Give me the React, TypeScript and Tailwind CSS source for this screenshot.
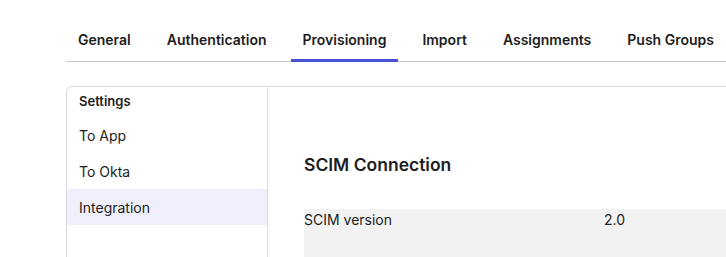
import React from 'react';

const tabs = ['General', 'Authentication', 'Provisioning', 'Import', 'Assignments', 'Push Groups'];
const sideItems = ['To App', 'To Okta', 'Integration'];

export default function App() {
  const active = 'Provisioning';
  const activeSide = 'Integration';

  return (
    <div
      className="w-[726px] h-[257px] overflow-hidden bg-white pl-[66px] text-[#1d1d21]"
      style={{ fontFamily: 'Inter, "Noto Sans", sans-serif' }}
    >
      {/* Tabs */}
      <div className="flex h-[62px] items-end gap-3 border-b border-[#c8c8cc]">
        {tabs.map((t) => (
          <div key={t} className="relative px-3 pb-[11px] text-[14px] leading-5 font-semibold whitespace-nowrap">
            {t}
            {t === active && (
              <span className="absolute left-0 right-0 bottom-[-1px] h-[3px] bg-[#4b51d6]"></span>
            )}
          </div>
        ))}
      </div>

      {/* Panel */}
      <div className="mt-6 flex h-[200px] border-l border-t border-[#dcdce0] rounded-tl-md">
        <div className="w-[201px] shrink-0 border-r border-[#dcdce0]">
          <div className="h-[30px] pl-3 flex items-center text-[13px] font-semibold">Settings</div>
          {sideItems.map((s) => (
            <div
              key={s}
              className={`h-9 pl-3 flex items-center text-[14px] ${s === activeSide ? 'bg-[#efeffb]' : ''}`}
            >
              {s}
            </div>
          ))}
        </div>

        <div className="flex-1 pl-9 pt-[66px]">
          <h2 className="text-[17.5px] leading-6 font-semibold">SCIM Connection</h2>
          <div className="mt-8 flex h-12 bg-[#f2f2f2] pt-px text-[14px] leading-5">
            <div className="w-[300px]">SCIM version</div>
            <div>2.0</div>
          </div>
        </div>
      </div>
    </div>
  );
}
